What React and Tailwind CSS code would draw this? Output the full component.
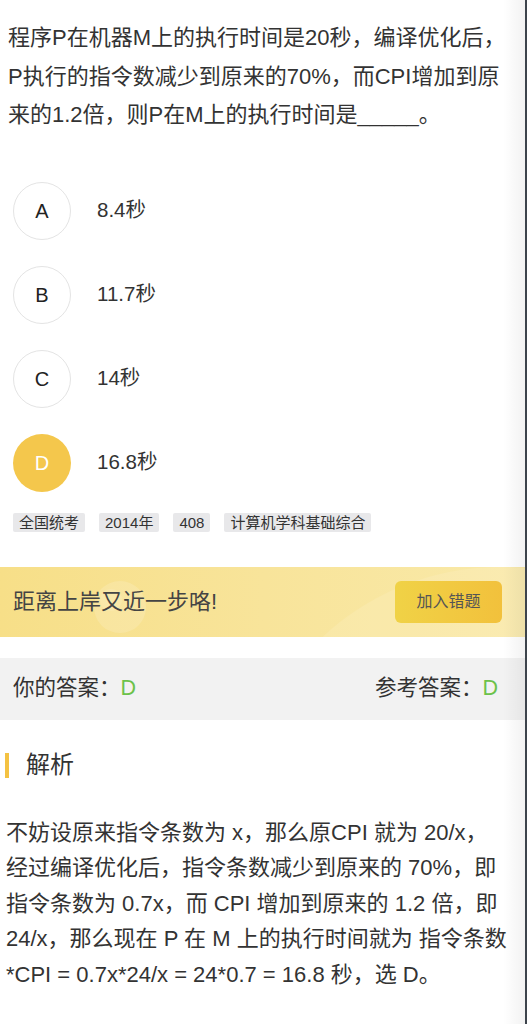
import React from 'react';

const font = { fontFamily: '"Liberation Sans", "Noto Sans CJK SC", sans-serif' };

const options = [
    { key: 'A', text: '8.4秒' },
    { key: 'B', text: '11.7秒' },
    { key: 'C', text: '14秒' },
    { key: 'D', text: '16.8秒', selected: true },
];

const tags = ['全国统考', '2014年', '408', '计算机学科基础综合'];

export default function App() {
    return (
        <div className="flex h-[1024px] w-full overflow-hidden bg-white text-[#333]" style={font}>
            <div className="relative flex-1 flex flex-col">
                {/* 题干 */}
                <div className="pt-[19px] pl-[8px] pr-[8px] text-[22px] leading-[38.5px] whitespace-nowrap">
                    程序P在机器M上的执行时间是20秒，编译优化后，<br />
                    P执行的指令数减少到原来的70%，而CPI增加到原<br />
                    来的1.2倍，则P在M上的执行时间是_____。
                </div>

                {/* 选项 */}
                <div className="mt-[47px] flex flex-col gap-[26px]">
                    {options.map((opt) => (
                        <div key={opt.key} className="flex items-center h-[58px]">
                            <div
                                className={
                                    opt.selected
                                        ? 'ml-[13px] w-[58px] h-[58px] rounded-full bg-[#f4c74c] text-white flex items-center justify-center text-[20px]'
                                        : 'ml-[13px] w-[58px] h-[58px] rounded-full border border-[#e4e4e4] text-[#222] flex items-center justify-center text-[20px]'
                                }
                            >
                                {opt.key}
                            </div>
                            <div className="ml-[26px] text-[20.5px]">{opt.text}</div>
                        </div>
                    ))}
                </div>

                {/* 标签 */}
                <div className="mt-[21px] pl-[13px] flex gap-[14px]">
                    {tags.map((t) => (
                        <span key={t} className="px-[6px] h-[19px] leading-[19px] text-[15px] bg-[#e8e8ea] rounded-[2px] text-[#333]">
                            {t}
                        </span>
                    ))}
                </div>

                {/* 横幅 */}
                <div className="relative mt-[35px] h-[70px] overflow-hidden bg-gradient-to-r from-[#f7df88] via-[#f8e49a] to-[#f9e9a8] flex items-center justify-between pl-[13px] pr-[23px]">
                    <div className="absolute left-[94px] top-[14px] w-[52px] h-[52px] rounded-full bg-white/15" />
                    <div className="absolute left-[100px] top-[22px] w-[22px] h-[22px] rounded-full bg-white/10" />
                    <div className="absolute left-[240px] top-[0px] w-[520px] h-[520px] rounded-full bg-white/10" />
                    <span className="relative text-[22px] text-[#444]">距离上岸又近一步咯!</span>
                    <button className="relative w-[107px] h-[42px] rounded-[6px] bg-gradient-to-r from-[#f0d246] to-[#f2c13c] text-[16px] text-[#555]">
                        加入错题
                    </button>
                </div>

                {/* 答案 */}
                <div className="mt-[21px] h-[62px] bg-[#f2f2f2] flex items-center justify-between pl-[13px] pr-[27px] text-[21.5px]">
                    <span>
                        你的答案：<span className="text-[#6cc24a]">D</span>
                    </span>
                    <span>
                        参考答案：<span className="text-[#6cc24a]">D</span>
                    </span>
                </div>

                {/* 解析 */}
                <div className="mt-[33px] flex items-center h-[25px]">
                    <div className="ml-[5px] w-[4px] h-[25px] bg-[#f4c242]" />
                    <span className="ml-[17px] text-[24px] text-[#333]">解析</span>
                </div>

                <div className="mt-[37px] px-[6px] text-[22px] leading-[35.5px] whitespace-nowrap">
                    不妨设原来指令条数为 x，那么原CPI 就为 20/x，<br />
                    经过编译优化后，指令条数减少到原来的 70%，即<br />
                    指令条数为 0.7x，而 CPI 增加到原来的 1.2 倍，即<br />
                    24/x，那么现在 P 在 M 上的执行时间就为 指令条数<br />
                    *CPI = 0.7x*24/x = 24*0.7 = 16.8 秒，选 D。
                </div>

                <div className="pointer-events-none absolute right-0 top-0 bottom-0 w-[22px] bg-gradient-to-r from-transparent to-black/[0.05]" />
            </div>
            <div className="w-[2px] bg-[#3d444c]" />
        </div>
    );
}
